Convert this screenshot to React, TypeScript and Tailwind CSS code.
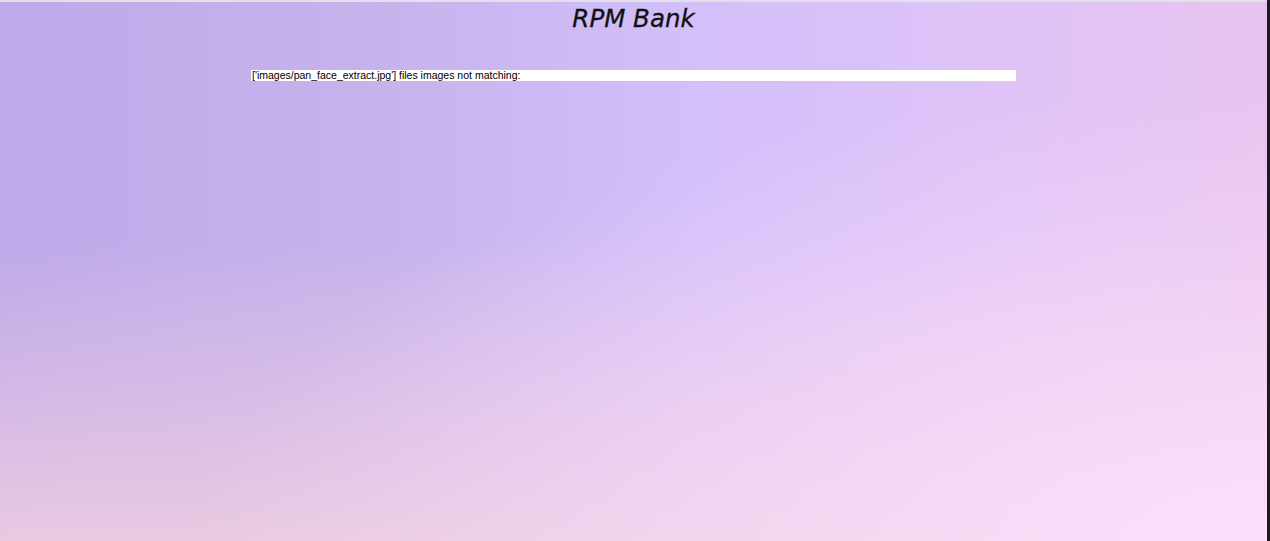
import React from "react";

function App() {
  // 에러 메시지 (얼굴 이미지 매칭 실패)
  const message = "['images/pan_face_extract.jpg'] files images not matching:";

  return (
    <div className="flex h-[541px] w-full overflow-hidden">
      <div className="flex flex-1 flex-col border-t-2 border-[#e4e0ea] bg-[linear-gradient(180deg,rgba(240,206,226,0)_45%,rgba(240,206,224,0.85)_100%),linear-gradient(90deg,#bea9e9_0%,#c6b3ec_30%,#d3bffa_55%,#dfc3f7_80%,#e8c3ef_100%)]">
        <div className="bg-[radial-gradient(ellipse_at_100%_100%,rgba(252,224,252,0.95)_0%,rgba(252,224,252,0)_60%)] flex flex-1 flex-col items-center">
          <h1 className="mt-[2px] text-[24.5px] leading-[30px] italic text-[#111] font-['DejaVu_Sans',sans-serif] [-webkit-text-stroke:0.3px_#111]">
            RPM Bank
          </h1>
          <div className="mt-[36px] h-[11px] w-[765px] bg-white">
            <p className="pl-[1px] text-[10.5px] leading-[11px] text-black font-['Liberation_Sans',Arial,sans-serif]">
              {message}
            </p>
          </div>
        </div>
      </div>
      <div className="w-[3px] bg-[#1b1b1b]" />
    </div>
  );
}
export default App;
